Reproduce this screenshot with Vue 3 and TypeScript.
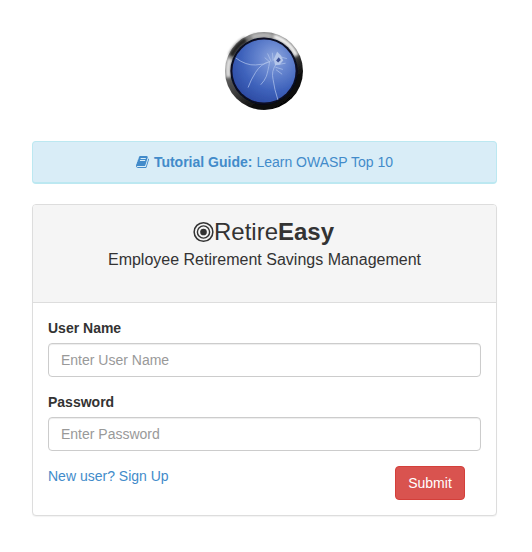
<script setup lang="ts">
const bookPath =
  'M1639 478q40 57 18 129l-275 906q-19 64-76.5 107.5t-122.5 43.5h-923q-77 0-148.5-53.5t-99.5-131.5q-24-67-2-127 0-4 3-27t4-37q1-8-3-21.5t-3-19.5q2-11 8-21t16.5-23.5 16.5-23.5q23-38 45-91.5t30-91.5q3-10 .5-30t-.5-28q3-11 17-28t17-23q21-36 42-92t25-90q1-9-2.5-32t.5-28q4-13 22-30.5t22-22.5q19-26 42.5-84.5t27.5-96.5q1-8-3-25.5t-2-26.5q2-8 9-18t18-23 17-21q8-12 16.5-30.5t15-35 16-36 19.5-32 26.5-23.5 36-11.5 47.5 5.5l-1 3q38-9 51-9h761q74 0 114 56t18 130l-274 906q-36 119-71.5 153.5t-128.5 34.5h-869q-27 0-38 15-11 16-1 43 24 70 144 70h923q29 0 56-15.5t35-41.5l300-987q7-22 5-57 38 15 59 43zm-1064 2q-4 13 2 22.5t20 9.5h608q13 0 25.5-9.5t16.5-22.5l21-64q4-13-2-22.5t-20-9.5h-608q-13 0-25.5 9.5t-16.5 22.5zm-83 256q-4 13 2 22.5t20 9.5h608q13 0 25.5-9.5t16.5-22.5l21-64q4-13-2-22.5t-20-9.5h-608q-13 0-25.5 9.5t-16.5 22.5z'
</script>

<template>
  <div class="page">
    <!-- OWASP logo -->
    <svg class="logo" viewBox="45 35 232 232" width="78" height="78">
      <defs>
        <linearGradient id="ring" x1="0.2" y1="0.05" x2="0.8" y2="0.95">
          <stop offset="0" stop-color="#8c8c8c" />
          <stop offset="0.55" stop-color="#3a3a3a" />
          <stop offset="0.8" stop-color="#0a0a0a" />
          <stop offset="1" stop-color="#050505" />
        </linearGradient>
        <radialGradient id="disc" cx="0.66" cy="0.3" r="0.8">
          <stop offset="0" stop-color="#8ea7dd" />
          <stop offset="0.3" stop-color="#6685cf" />
          <stop offset="0.65" stop-color="#3e62bb" />
          <stop offset="1" stop-color="#2a479f" />
        </radialGradient>
        <filter id="soft" x="-10%" y="-10%" width="120%" height="120%">
          <feGaussianBlur stdDeviation="1.6" />
        </filter>
        <filter id="softer" x="-20%" y="-20%" width="140%" height="140%">
          <feGaussianBlur stdDeviation="5" />
        </filter>
      </defs>
      <circle cx="161" cy="151" r="116" fill="url(#ring)" filter="url(#soft)" />
      <g fill="none" stroke-width="15" filter="url(#softer)">
        <path d="M189 48A107 107 0 0 1 258 106" stroke="#f4f4f4" />
        <path d="M56 170A107 107 0 0 1 60 114" stroke="#e4e4e4" />
        <path d="M64 106A107 107 0 0 1 108 58" stroke="#1c1c1c" />
        <path d="M125 50A107 107 0 0 1 185 48" stroke="#b8b8b8" />
      </g>
      <circle cx="161" cy="151" r="100" fill="#070b22" filter="url(#soft)" />
      <circle cx="161" cy="151" r="94" fill="url(#disc)" filter="url(#soft)" />
      <g fill="none" stroke="#aec2ea" stroke-width="2.2" stroke-linecap="round" filter="url(#soft)">
        <path d="M78 113q30 22 58 20 26 0 42-10" />
        <path d="M178 123q-26 6-42 32-14 22-22 44" />
        <path d="M196 132q-14 20-8 44 4 30 14 60" />
        <path d="M178 123q-6 32-10 44-6 14-16 24" />
        <path d="M164 112l14 12M172 100l10 22M186 98l2 22M196 140l20 6M198 148l16 12M202 132l22-4M214 110l14 4" />
      </g>
      <path d="M190 116l10-22 12 12 6 14-10 12-14 2z" fill="#b4c6ea" filter="url(#soft)" />
      <path d="M197 120l8-10 6 8-8 8z" fill="#3a4f96" filter="url(#soft)" />
    </svg>

    <div class="alert">
      <svg class="book" viewBox="0 0 1792 1792" width="14" height="14">
        <path :d="bookPath" fill="#428bca" />
      </svg>
      <strong>Tutorial Guide:</strong>
      <a class="link">Learn OWASP Top 10</a>
    </div>

    <div class="panel">
      <div class="panel-heading">
        <div class="title">
          <svg class="target" viewBox="0 0 22 22" width="21" height="22">
            <circle cx="11" cy="11" r="9.8" fill="none" stroke="#333" stroke-width="1.6" />
            <circle cx="11" cy="11" r="6.4" fill="none" stroke="#333" stroke-width="1.5" />
            <circle cx="11" cy="11" r="3.5" fill="#333" />
          </svg>
          <span>Retire<b>Easy</b></span>
        </div>
        <div class="subtitle">Employee Retirement Savings Management</div>
      </div>

      <form class="panel-body" @submit.prevent>
        <div class="field">
          <label>User Name</label>
          <input type="text" placeholder="Enter User Name" />
        </div>
        <div class="field">
          <label>Password</label>
          <input type="password" placeholder="Enter Password" />
        </div>
        <div class="actions">
          <a class="link">New user? Sign Up</a>
          <button type="submit">Submit</button>
        </div>
      </form>
    </div>
  </div>
</template>

<style>
body {
  background: #fff;
}
</style>

<style scoped>
.page {
  box-sizing: border-box;
  width: 532px;
  height: 552px;
  padding: 32px 35px 0 32px;
  font-family: "Liberation Sans", Arial, sans-serif;
  font-size: 14px;
  line-height: 20px;
  color: #333;
}

.logo {
  display: block;
  margin: 0 0 31px 193px;
}

.alert {
  box-sizing: border-box;
  height: 43px;
  margin-bottom: 20px;
  display: flex;
  align-items: center;
  justify-content: center;
  gap: 4px;
  color: #428bca;
  background: #d9edf7;
  border: 1px solid #bce8f1;
  border-bottom-width: 2px;
  border-radius: 4px;
}

.book {
  flex: none;
}

.link {
  color: #428bca;
  text-decoration: none;
}

.panel {
  box-sizing: border-box;
  height: 312px;
  background: #fff;
  border: 1px solid #ddd;
  border-radius: 4px;
  box-shadow: 0 1px 1px rgba(0, 0, 0, 0.05);
}

.panel-heading {
  box-sizing: border-box;
  height: 98px;
  padding-top: 12px;
  background: #f5f5f5;
  border-bottom: 1px solid #ddd;
  border-radius: 3px 3px 0 0;
  text-align: center;
}

.title {
  display: flex;
  align-items: center;
  justify-content: center;
  height: 30px;
  padding-right: 2px;
  font-size: 24px;
  line-height: 30px;
}

.target {
  flex: none;
}

.subtitle {
  margin-top: 1px;
  font-size: 16px;
  line-height: 24px;
}

.panel-body {
  padding: 15px;
}

.field {
  margin-bottom: 15px;
}

label {
  display: block;
  margin-bottom: 5px;
  font-weight: bold;
}

input {
  display: block;
  box-sizing: border-box;
  width: 100%;
  height: 34px;
  padding: 6px 12px;
  font-family: inherit;
  font-size: 14px;
  color: #555;
  background: #fff;
  border: 1px solid #ccc;
  border-radius: 4px;
  box-shadow: inset 0 1px 1px rgba(0, 0, 0, 0.075);
  outline: none;
}

input::placeholder {
  color: #999;
  opacity: 1;
}

.actions {
  display: flex;
  justify-content: space-between;
  align-items: flex-start;
  padding-right: 16px;
}

button {
  box-sizing: border-box;
  width: 70px;
  height: 34px;
  padding: 6px 12px;
  font-family: inherit;
  font-size: 14px;
  line-height: 20px;
  color: #fff;
  background: #d9534f;
  border: 1px solid #d43f3a;
  border-radius: 4px;
}
</style>
